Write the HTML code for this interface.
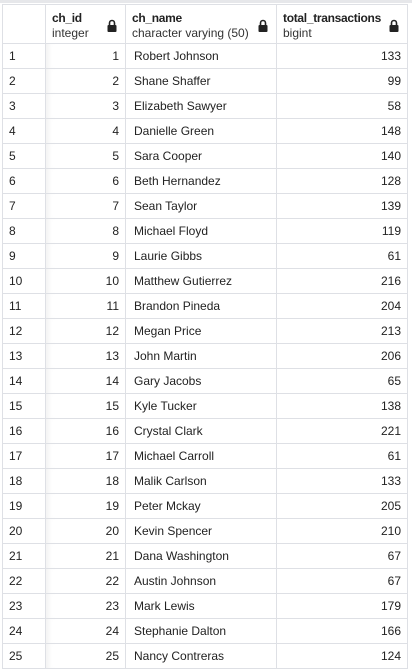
<!DOCTYPE html><html><head><style>
body{margin:0;width:412px;height:672px;background:#fff;font-family:"Liberation Sans",Arial,sans-serif;font-size:12px;color:#222;overflow:hidden;position:relative}
.top{position:absolute;left:0;top:0;width:412px;height:3px;background:#e6e7ea}
table{position:absolute;left:2px;top:4px;border-collapse:collapse;table-layout:fixed}
td,th{border:1px solid #dee0e5;padding:0;height:24px;white-space:nowrap}
th{height:38px;text-align:left;font-weight:normal;vertical-align:top;position:relative}
th b{display:block;margin:6px 0 0 6px;font-weight:bold;font-size:12px;line-height:14px;letter-spacing:-0.3px}
th span{display:block;margin-left:6px;line-height:16px;color:#333}
th svg{position:absolute;right:8px;top:14px}
td.n{padding-left:6px}
td.r{text-align:right;padding-right:6px}
td.s{padding-left:8px}
td.i{box-shadow:inset 6px 0 6px -4px rgba(0,0,0,.06)}
</style></head><body><div class="top"></div>
<table>
<colgroup><col style="width:43px"><col style="width:80px"><col style="width:151px"><col style="width:131px"></colgroup>
<tr><th></th>
<th><b>ch_id</b><span>integer</span><svg width="10" height="13" viewBox="0 0 10 13"><path d="M2.5 6V4a2.5 2.5 0 0 1 5 0v2" stroke="#222" stroke-width="1.6" fill="none"/><rect x="0.5" y="6" width="9" height="7" rx="1" fill="#222"/></svg></th>
<th><b>ch_name</b><span>character varying (50)</span><svg width="10" height="13" viewBox="0 0 10 13"><path d="M2.5 6V4a2.5 2.5 0 0 1 5 0v2" stroke="#222" stroke-width="1.6" fill="none"/><rect x="0.5" y="6" width="9" height="7" rx="1" fill="#222"/></svg></th>
<th><b>total_transactions</b><span>bigint</span><svg width="10" height="13" viewBox="0 0 10 13"><path d="M2.5 6V4a2.5 2.5 0 0 1 5 0v2" stroke="#222" stroke-width="1.6" fill="none"/><rect x="0.5" y="6" width="9" height="7" rx="1" fill="#222"/></svg></th></tr>
<tr><td class="n">1</td><td class="r i">1</td><td class="s">Robert Johnson</td><td class="r">133</td></tr>
<tr><td class="n">2</td><td class="r i">2</td><td class="s">Shane Shaffer</td><td class="r">99</td></tr>
<tr><td class="n">3</td><td class="r i">3</td><td class="s">Elizabeth Sawyer</td><td class="r">58</td></tr>
<tr><td class="n">4</td><td class="r i">4</td><td class="s">Danielle Green</td><td class="r">148</td></tr>
<tr><td class="n">5</td><td class="r i">5</td><td class="s">Sara Cooper</td><td class="r">140</td></tr>
<tr><td class="n">6</td><td class="r i">6</td><td class="s">Beth Hernandez</td><td class="r">128</td></tr>
<tr><td class="n">7</td><td class="r i">7</td><td class="s">Sean Taylor</td><td class="r">139</td></tr>
<tr><td class="n">8</td><td class="r i">8</td><td class="s">Michael Floyd</td><td class="r">119</td></tr>
<tr><td class="n">9</td><td class="r i">9</td><td class="s">Laurie Gibbs</td><td class="r">61</td></tr>
<tr><td class="n">10</td><td class="r i">10</td><td class="s">Matthew Gutierrez</td><td class="r">216</td></tr>
<tr><td class="n">11</td><td class="r i">11</td><td class="s">Brandon Pineda</td><td class="r">204</td></tr>
<tr><td class="n">12</td><td class="r i">12</td><td class="s">Megan Price</td><td class="r">213</td></tr>
<tr><td class="n">13</td><td class="r i">13</td><td class="s">John Martin</td><td class="r">206</td></tr>
<tr><td class="n">14</td><td class="r i">14</td><td class="s">Gary Jacobs</td><td class="r">65</td></tr>
<tr><td class="n">15</td><td class="r i">15</td><td class="s">Kyle Tucker</td><td class="r">138</td></tr>
<tr><td class="n">16</td><td class="r i">16</td><td class="s">Crystal Clark</td><td class="r">221</td></tr>
<tr><td class="n">17</td><td class="r i">17</td><td class="s">Michael Carroll</td><td class="r">61</td></tr>
<tr><td class="n">18</td><td class="r i">18</td><td class="s">Malik Carlson</td><td class="r">133</td></tr>
<tr><td class="n">19</td><td class="r i">19</td><td class="s">Peter Mckay</td><td class="r">205</td></tr>
<tr><td class="n">20</td><td class="r i">20</td><td class="s">Kevin Spencer</td><td class="r">210</td></tr>
<tr><td class="n">21</td><td class="r i">21</td><td class="s">Dana Washington</td><td class="r">67</td></tr>
<tr><td class="n">22</td><td class="r i">22</td><td class="s">Austin Johnson</td><td class="r">67</td></tr>
<tr><td class="n">23</td><td class="r i">23</td><td class="s">Mark Lewis</td><td class="r">179</td></tr>
<tr><td class="n">24</td><td class="r i">24</td><td class="s">Stephanie Dalton</td><td class="r">166</td></tr>
<tr><td class="n">25</td><td class="r i">25</td><td class="s">Nancy Contreras</td><td class="r">124</td></tr>
</table></body></html>
